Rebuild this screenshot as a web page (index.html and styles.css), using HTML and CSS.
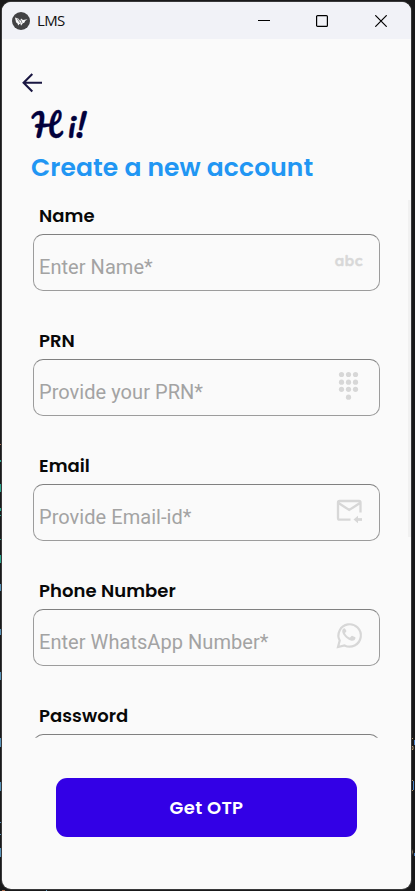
FILE: index.html
```html
<!DOCTYPE html>
<html lang="en">
<head>
<meta charset="utf-8">
<title>LMS</title>
<link rel="stylesheet" href="styles.css">
</head>
<body>
<div class="desktop" aria-hidden="true">
  <svg width="415" height="891" viewBox="0 0 415 891">
    <g fill="#2aa58c"><path d="M0 460h2v2H0zM0 484h2v8H0zM0 508h2v3H0zM0 515h2v1H0zM0 539h2v1H0zM0 555h2v8H0z"/></g>
    <g fill="#5792b8"><path d="M0 584h2v7H0zM0 629h2v6H0zM0 672h2v8H0zM0 738h2v9H0zM0 782h2v9H0zM0 822h2v1H0zM0 834h2v1H0zM0 848h2v9H0zM46 889h1v2h-1z"/></g>
    <path fill="#a96e50" d="M0 444h2v1H0zM2 890h3v1H2z"/>
    <path fill="none" stroke="#b59a70" d="M413 738.500h-2M411.500 741v3M411 746.500h2v3h-2M411 780.500h2M411 790.500h2M411.500 849q1.500 3 0 6"/>
    <path fill="#4b82c4" d="M413 781h1v9h-1zM414 740h1v5h-1zM414 853h1v3h-1z"/>
  </svg>
</div>
<div class="window">
  <header class="titlebar">
    <svg class="app-icon" width="18" height="18" viewBox="0 0 18 18"><circle cx="9" cy="9" r="9" fill="#424244"/><path fill="#f7f7f8" d="M3 5.500l3.200 1 2 2.500.8-2.500 2 1.500 4.600-.7-2.300 1.500-1 2-1.500.4-1.800 2.600-.6-2-1 .1-1.200 1.500-.7-2-1.500-1.200z"/><path stroke="#424244" stroke-width=".6" d="M5 6.500l3.500 5M9 8l1 3"/></svg>
    <span class="app-name">LMS</span>
    <div class="controls">
      <svg width="12" height="12" viewBox="0 0 12 12"><path d="M0 5.500h12" stroke="#000"/></svg>
      <svg width="12" height="12" viewBox="0 0 12 12"><rect x=".6" y=".6" width="10.800" height="10.800" rx="1" fill="none" stroke="#000" stroke-width="1.200"/></svg>
      <svg width="12" height="12" viewBox="0 0 12 12"><path d="M.3.3l11.400 11.400M11.700.3L.3 11.700" stroke="#000" stroke-width="1.200"/></svg>
    </div>
  </header>
  <main class="screen">
    <svg class="back" width="20" height="20" viewBox="0 0 20 20"><path d="M20 9.700H2M10.300 1L1.600 9.700l8.700 8.700" fill="none" stroke="#1a1742" stroke-width="2.100"/></svg>
    <h1 class="hi"><span>H</span>i!</h1>
    <h2 class="heading"><span>Create a new account</span></h2>
    <div class="form">
      <section class="group">
        <label class="label">Name</label>
        <div class="field"><span>Enter Name*</span><b class="abc">abc</b></div>
      </section>
      <section class="group">
        <label class="label">PRN</label>
        <div class="field"><span>Provide your PRN*</span>
          <svg class="icon" width="30" height="30" viewBox="0 0 30 30" fill="#d7d7d7"><circle cx="7.500" cy="4.500" r="2.600"/><circle cx="14.500" cy="4.500" r="2.600"/><circle cx="21.500" cy="4.500" r="2.600"/><circle cx="7.500" cy="12.200" r="2.600"/><circle cx="14.500" cy="12.200" r="2.600"/><circle cx="21.500" cy="12.200" r="2.600"/><circle cx="7.500" cy="19.300" r="2.600"/><circle cx="14.500" cy="19.300" r="2.600"/><circle cx="21.500" cy="19.300" r="2.600"/><circle cx="14.500" cy="27.200" r="2.600"/></svg>
        </div>
      </section>
      <section class="group">
        <label class="label">Email</label>
        <div class="field"><span>Provide Email-id*</span>
          <svg class="icon" width="30" height="30" viewBox="0 0 30 30" fill="none" stroke="#d7d7d7" stroke-width="2.300"><path d="M16.500 24.700H5.500Q4 24.700 4 23V7.500Q4 6 5.500 6H25Q26.500 6 26.500 7.500V17.500M4.500 8L15.200 15 26 8"/><path d="M28 24.500h-5" stroke-width="2.800"/><path d="M24 20.800v7.400l-4.500-3.700z" fill="#d7d7d7" stroke="none"/></svg>
        </div>
      </section>
      <section class="group">
        <label class="label">Phone Number</label>
        <div class="field"><span>Enter WhatsApp Number*</span>
          <svg class="icon" width="30" height="30" viewBox="0 0 30 30"><path d="M4 27l1.700-6.400A11.200 11.200 0 1 1 10.500 25.400z" fill="none" stroke="#d7d7d7" stroke-width="2.200"/><path fill="#d7d7d7" d="M11.300 9c-.5-1-1.400-.8-2-.2-2.100 2-.7 4.800.8 6.700 1.800 2.400 4 4.200 6.700 5 2.300.7 4-.3 4.500-1.800.3-1 .2-1.300-.5-1.700l-2.300-1.100c-.6-.3-.9-.1-1.300.4l-.8 1c-.4.500-.8.300-1.400 0-1.900-.9-3.100-2.200-3.900-3.700-.2-.4 0-.7.300-1l.9-1.200c.1-.3 0-.6-.1-.9z"/></svg>
        </div>
      </section>
      <section class="group">
        <label class="label">Password</label>
        <div class="field"></div>
      </section>
    </div>
    <button class="submit"><span>Get OTP</span></button>
  </main>
  <i class="scroll"></i>
</div>
</body>
</html>
```

FILE: styles.css
```css
* { box-sizing: border-box; }
body { margin: 0; width: 415px; height: 891px; overflow: hidden; background: #19191a; padding: 2px 4px 2px 2px; font-family: "Poppins", "Inter", sans-serif; }
.desktop { position: absolute; left: 0; top: 0; }
.desktop svg { display: block; }
.window { position: relative; width: 409px; height: 887px; background: #fafafa; border-radius: 9px; overflow: hidden; box-shadow: 0 0 0 1px #39393a; }
.titlebar { height: 37px; background: #f1f2f7; display: flex; align-items: center; padding: 0 24px 0 10px; }
.app-icon { margin-right: 7px; }
.app-name { font: 15px/20px "Segoe UI", "Open Sans", sans-serif; letter-spacing: -0.7px; color: #111; padding-bottom: 2px; }
.controls { margin-left: auto; display: flex; gap: 47px; }
.controls svg { display: block; }
.controls svg:nth-child(2) { margin-left: -1px; }
.screen { display: flex; flex-direction: column; align-items: flex-start; }
.back { margin: 34px 0 0 20px; display: block; }
.hi { margin: 12px 0 0 30px; height: 40px; font: 31px/41px "Pacifico", cursive; color: #02013c; letter-spacing: 0; -webkit-text-stroke: .3px #02013c; }
.hi span { letter-spacing: 9px; }
.heading { margin: 4px 0 0 29px; height: 38px; line-height: 38px; font-size: 25px; font-weight: 600; color: #2196f3; white-space: nowrap; letter-spacing: .09px; }
.form { width: 409px; height: 537px; margin-top: 14px; overflow: hidden; }
.group { height: 125px; padding-left: 31px; }
.label { display: block; height: 33px; padding-left: 6px; font-size: 18px; line-height: 30px; font-weight: 600; color: #080808; letter-spacing: .05px; }
.field { width: 347px; height: 57px; border: 1px solid; border-color: #808080 #9c9c9c #9c9c9c; border-radius: 10px; padding: 0 15px 0 5px; display: flex; justify-content: space-between; font: 20px/24px Roboto, sans-serif; letter-spacing: .05px; color: #a3a3a3; }
.field span { padding-top: 20px; white-space: nowrap; }
.icon { margin-top: 10px; }
.abc { font: 700 15px/20px "Quicksand", "Nunito", "Poppins", Lato, sans-serif; letter-spacing: .5px; color: #d8d8d8; -webkit-text-stroke: .5px #d8d8d8; margin: 16px 1px 0 0; }
.submit { margin: 40px 0 0 54px; width: 301px; height: 59px; border: 0; border-radius: 11px; background: #3300e6; color: #fff; font: 600 18px/59px "Poppins", "Inter", sans-serif; letter-spacing: .3px; padding: 0; }
.scroll { position: absolute; right: 0; top: 198px; width: 3px; height: 337px; background: #f1f1f1; }
```
